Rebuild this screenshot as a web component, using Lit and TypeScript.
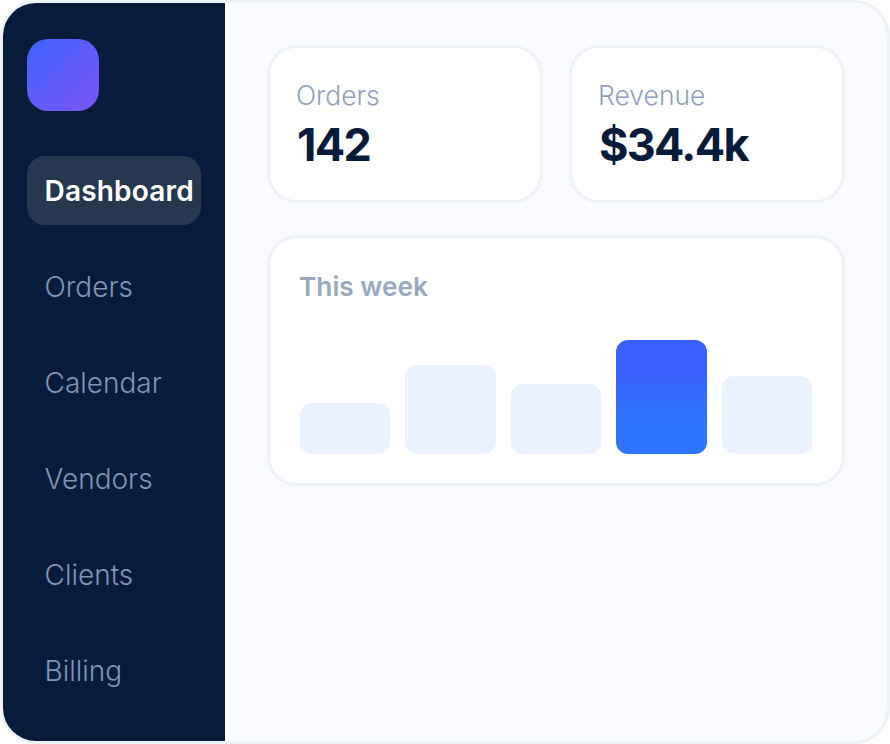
import { LitElement, html, css } from "lit";
import { customElement } from "lit/decorators.js";

@customElement("app-root")
export class AppRoot extends LitElement {
  static styles = css`
    :host { display: block; width: 890px; height: 744px; font-family: Inter, "Liberation Sans", sans-serif; }
    * { box-sizing: border-box; }
    .shell { width: 890px; height: 744px; border: 3px solid #eef2f9; border-radius: 36px; overflow: hidden; display: flex; background: #f9fbff; }
    .side { width: 222px; flex: none; background: #061c3a; padding: 36px 24px; display: flex; flex-direction: column; }
    .logo { width: 72px; height: 72px; border-radius: 21px; background: linear-gradient(135deg, #3e62ff, #7c55f6); margin-bottom: 45px; }
    .nav { display: flex; flex-direction: column; gap: 27px; }
    .item { height: 69px; width: 174px; border-radius: 18px; padding: 1px 18px 0 17.5px; display: flex; align-items: center; font-size: 28px; font-weight: 300; color: #7f95b5; white-space: nowrap; }
    .item.active { background: #263750; color: #fff; font-weight: 600; letter-spacing: 0.2px; }
    .main { flex: 1; min-width: 0; padding: 42px 42px 0 42px; display: flex; flex-direction: column; gap: 32px; }
    .stats { display: grid; grid-template-columns: 1fr 1fr; gap: 26px; }
    .card { background: #fff; border: 3px solid #eef2f9; border-radius: 30px; }
    .stat { height: 158px; padding: 29px 26px; }
    .label { font-size: 26.5px; font-weight: 300; line-height: 36px; color: #8fa1ba; }
    .value { font-size: 45px; line-height: 52px; font-weight: 700; letter-spacing: -1.7px; color: #061c3a; margin: 6px 0 0 1px; }
    .chart { height: 251px; padding: 31px 30px 29px; display: flex; flex-direction: column; }
    .title { font-size: 26.25px; line-height: 36px; font-weight: 600; color: #98a8bf; margin-left: -1px; }
    .bars { display: flex; align-items: flex-end; gap: 15px; margin-top: auto; }
    .bar { flex: 1; background: #eaf2ff; border-radius: 12px; }
    .bar.hot { background: linear-gradient(180deg, #3a60ff 30%, #2f74ff 70%); }
  `;

  render() {
    const nav = ["Dashboard", "Orders", "Calendar", "Vendors", "Clients", "Billing"];
    const bars = [51, 89, 70, 114, 78];
    return html`<div class="shell">
      <aside class="side">
        <div class="logo"></div>
        <nav class="nav">
          ${nav.map((n, i) => html`<div class="item ${i === 0 ? "active" : ""}">${n}</div>`)}
        </nav>
      </aside>
      <main class="main">
        <div class="stats">
          <div class="card stat"><div class="label">Orders</div><div class="value">142</div></div>
          <div class="card stat"><div class="label">Revenue</div><div class="value">$34.4k</div></div>
        </div>
        <div class="card chart">
          <div class="title">This week</div>
          <div class="bars">
            ${bars.map((h, i) => html`<div class="bar ${i === 3 ? "hot" : ""}" style="height:${h}px"></div>`)}
          </div>
        </div>
      </main>
    </div>`;
  }
}
